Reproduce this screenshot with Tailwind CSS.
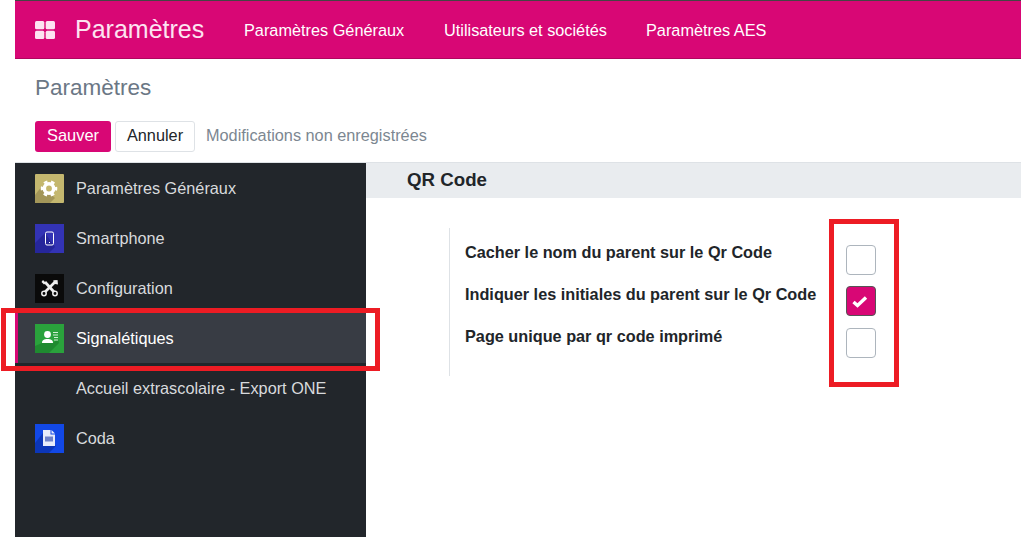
<!DOCTYPE html>
<html lang="fr">
  <head>
    <meta charset="UTF-8" />
    <title>Paramètres</title>
    <script src="https://cdn.jsdelivr.net/npm/@tailwindcss/browser@4"></script>
  </head>
  <body class="bg-white font-['Liberation_Sans',Arial,sans-serif]">
    <div class="relative h-[537px] w-[1021px] overflow-hidden pl-[15px]">
      <!-- barre du haut -->
      <nav class="flex h-[59px] items-center border-t border-t-[#444] border-b border-b-[#b0065f] bg-[#d80775] pl-5 whitespace-nowrap text-white">
        <svg class="h-[18px] w-[20px] shrink-0" viewBox="0 0 20 18" fill="#fde3f1">
          <rect x="0" y="0" width="9.300" height="8.300" rx="1.500" />
          <rect x="10.700" y="0" width="9.300" height="8.300" rx="1.500" />
          <rect x="0" y="9.700" width="9.300" height="8.300" rx="1.500" />
          <rect x="10.700" y="9.700" width="9.300" height="8.300" rx="1.500" />
        </svg>
        <span class="ml-[20px] w-[129px] text-[25px] leading-none text-[#fde3f1]">Paramètres</span>
        <a class="ml-[40px] w-[160px] pt-[2px] text-[16.300px]">Paramètres Généraux</a>
        <a class="ml-[40px] w-[162px] pt-[2px] text-[16.300px]">Utilisateurs et sociétés</a>
        <a class="ml-[40px] pt-[2px] text-[16.300px]">Paramètres AES</a>
      </nav>

      <!-- fil d'ariane et boutons -->
      <div class="h-[104px] border-b border-[#dee2e6] px-5">
        <h1 class="pt-[15px] text-[22.500px] leading-[28px] text-[#6b7785]">Paramètres</h1>
        <div class="mt-[19px] flex items-center">
          <button class="h-[31px] w-[76px] rounded-[3px] bg-[#d80775] pb-[2px] text-[16.400px] text-white">Sauver</button>
          <button class="ml-[4px] h-[31px] w-[80px] rounded-[3px] border border-[#dee2e6] bg-white pb-[2px] text-[16.300px] text-[#212529]">Annuler</button>
          <span class="ml-[11px] pb-[2px] text-[16.300px] text-[#7c8791]">Modifications non enregistrées</span>
        </div>
      </div>

      <div class="flex h-[374px]">
        <!-- menu de gauche -->
        <aside class="w-[351px] shrink-0 bg-[#22262b] text-[16.280px] text-[#d8dadd]">
          <div class="flex h-[50px] items-center pl-5">
            <svg class="h-[29px] w-[29px] shrink-0" viewBox="0 0 29 29">
              <rect width="29" height="29" rx="1" fill="#c4b76f" />
              <path d="M0 29V21L7 12 20 24 15 29Z" fill="#a39659" />
              <circle cx="14" cy="14.500" r="4.700" fill="none" stroke="#fff" stroke-width="3.600" />
              <circle cx="14" cy="14.500" r="7" fill="none" stroke="#fff" stroke-width="2.600" stroke-dasharray="3.665 3.665" stroke-dashoffset="1.800" />
            </svg>
            <span class="ml-[12px]">Paramètres Généraux</span>
          </div>
          <div class="flex h-[50px] items-center pl-5">
            <svg class="h-[29px] w-[29px] shrink-0" viewBox="0 0 29 29">
              <rect width="29" height="29" fill="#3333b5" />
              <path d="M0 29V19L10 9 20 23 14 29Z" fill="#26269b" />
              <rect x="10.500" y="8" width="8" height="13" rx="1.500" fill="none" stroke="#fff" stroke-width="1" />
              <rect x="14" y="18" width="1" height="1" fill="#fff" />
            </svg>
            <span class="ml-[12px]">Smartphone</span>
          </div>
          <div class="flex h-[50px] items-center pl-5">
            <svg class="h-[29px] w-[29px] shrink-0" viewBox="0 0 29 29">
              <rect width="29" height="29" fill="#0a0a0a" />
              <path d="M10 8 19 18" stroke="#eee" stroke-width="2.800" fill="none" />
              <path d="M8 6 6.500 8 9 10.500 11 9Z" fill="#eee" />
              <path d="M21 7 10 18" stroke="#eee" stroke-width="2.600" fill="none" />
              <path d="M18 6.500 22.500 6 23 10.500 20 10Z" fill="#eee" />
              <circle cx="9" cy="19.500" r="2.200" fill="#0a0a0a" stroke="#eee" stroke-width="1.500" />
              <circle cx="20" cy="19.500" r="2.200" fill="#0a0a0a" stroke="#eee" stroke-width="1.500" />
            </svg>
            <span class="ml-[12px]">Configuration</span>
          </div>
          <div class="flex h-[50px] items-center border-l-[3px] border-[#d80775] bg-[#383c44] pl-[17px] text-white">
            <svg class="h-[29px] w-[29px] shrink-0" viewBox="0 0 29 29">
              <rect width="29" height="29" fill="#2aa23c" />
              <path d="M0 29V22L7 19H18L23 15 24 19 14 29Z" fill="#1f8a30" />
              <circle cx="12.500" cy="10.500" r="3.400" fill="#fff" />
              <path d="M7 19c0-3 2-4 5.500-4s5.500 1 5.500 4Z" fill="#fff" />
              <path d="M18 8.500h5M18 11h5M19 13.500h4M19 16h4" stroke="#cfeed3" stroke-width="1" />
            </svg>
            <span class="ml-[12px]">Signalétiques</span>
          </div>
          <div class="flex h-[50px] items-center pl-[61px]">Accueil extrascolaire - Export ONE</div>
          <div class="flex h-[50px] items-center pl-5">
            <svg class="h-[29px] w-[29px] shrink-0" viewBox="0 0 29 29">
              <rect width="29" height="29" fill="#1248e6" />
              <path d="M0 29V19L8 9 21 22 14 29Z" fill="#0c36b8" />
              <path d="M8 6h7.500v4.500H20V22H8Z" fill="#e8ecfa" />
              <path d="M16.500 6 20 9.500H16.500Z" fill="#e8ecfa" />
              <rect x="10" y="12.500" width="8" height="5" fill="#6f82c8" />
            </svg>
            <span class="ml-[12px]">Coda</span>
          </div>
        </aside>

        <!-- contenu -->
        <main class="min-w-0 flex-1">
          <h2 class="h-[35px] bg-[#e9ecef] pl-[41px] text-[18.700px] leading-[33px] font-bold text-[#212529]">QR Code</h2>
          <div class="mt-[30px] ml-[83px] flex h-[148px] border-l border-[#dee2e6] pl-[15px]">
            <div class="w-[381px] pt-[15px] text-[16.250px] font-bold text-[#212529]">
              <p class="h-[42px] leading-[18px]">Cacher le nom du parent sur le Qr Code</p>
              <p class="h-[42px] leading-[18px]">Indiquer les initiales du parent sur le Qr Code</p>
              <p class="leading-[18px]">Page unique par qr code imprimé</p>
            </div>
            <div class="flex flex-col pt-[17px]">
              <span class="h-[30px] w-[30px] rounded-[4px] border border-[#adb5bd] bg-white"></span>
              <span class="mt-[11px] flex h-[30px] w-[30px] items-center justify-center rounded-[4px] border border-[#555] bg-[#d80775] pt-[2px] pr-[2px]">
                <svg class="h-[12px] w-[16px]" viewBox="0 0 16 12">
                  <path d="M1.500 6 5.500 9.500 14 1.500" fill="none" stroke="#fff" stroke-width="3.400" />
                </svg>
              </span>
              <span class="mt-[12px] h-[30px] w-[30px] rounded-[4px] border border-[#adb5bd] bg-white"></span>
            </div>
          </div>
        </main>
      </div>

      <!-- cadres rouges d'annotation -->
      <div class="absolute top-[308px] left-[1px] h-[63px] w-[379px] border-[5px] border-[#ed1c24]"></div>
      <div class="absolute top-[219px] left-[829px] h-[168px] w-[70px] border-[5px] border-[#ed1c24]"></div>
    </div>
  </body>
</html>
